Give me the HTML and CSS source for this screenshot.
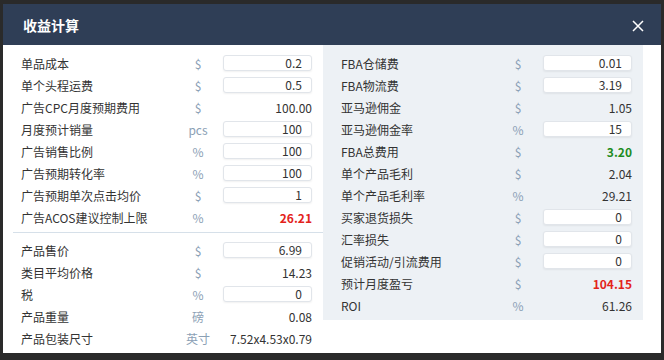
FILE: index.html
```html
<!DOCTYPE html>
<html lang="zh-CN">
<head>
<meta charset="utf-8">
<title>收益计算</title>
<link rel="stylesheet" href="styles.css">
</head>
<body>
<div class="modal">
  <div class="modal-header">
    <span class="modal-title">收益计算</span>
    <svg class="close" width="12" height="12" viewBox="0 0 12 12"><path d="M1 1L11 11M11 1L1 11" stroke="#fff" stroke-width="1.5" fill="none"/></svg>
  </div>
  <div class="modal-body">
    <div class="panel panel-left">
      <div class="row"><span class="label">单品成本</span><span class="unit">$</span><span class="input">0.2</span></div>
      <div class="row"><span class="label">单个头程运费</span><span class="unit">$</span><span class="input">0.5</span></div>
      <div class="row"><span class="label">广告CPC月度预期费用</span><span class="unit">$</span><span class="value">100.00</span></div>
      <div class="row"><span class="label">月度预计销量</span><span class="unit">pcs</span><span class="input">100</span></div>
      <div class="row"><span class="label">广告销售比例</span><span class="unit">%</span><span class="input">100</span></div>
      <div class="row"><span class="label">广告预期转化率</span><span class="unit">%</span><span class="input">100</span></div>
      <div class="row"><span class="label">广告预期单次点击均价</span><span class="unit">$</span><span class="input">1</span></div>
      <div class="row"><span class="label">广告ACOS建议控制上限</span><span class="unit">%</span><span class="value red">26.21</span></div>
      <div class="divider"></div>
      <div class="row"><span class="label">产品售价</span><span class="unit">$</span><span class="input">6.99</span></div>
      <div class="row"><span class="label">类目平均价格</span><span class="unit">$</span><span class="value">14.23</span></div>
      <div class="row"><span class="label">税</span><span class="unit">%</span><span class="input">0</span></div>
      <div class="row"><span class="label">产品重量</span><span class="unit">磅</span><span class="value">0.08</span></div>
      <div class="row"><span class="label">产品包装尺寸</span><span class="unit">英寸</span><span class="value">7.52x4.53x0.79</span></div>
    </div>
    <div class="panel panel-right">
      <div class="row"><span class="label">FBA仓储费</span><span class="unit">$</span><span class="input">0.01</span></div>
      <div class="row"><span class="label">FBA物流费</span><span class="unit">$</span><span class="input">3.19</span></div>
      <div class="row"><span class="label">亚马逊佣金</span><span class="unit">$</span><span class="value">1.05</span></div>
      <div class="row"><span class="label">亚马逊佣金率</span><span class="unit">%</span><span class="input">15</span></div>
      <div class="row"><span class="label">FBA总费用</span><span class="unit">$</span><span class="value green">3.20</span></div>
      <div class="row"><span class="label">单个产品毛利</span><span class="unit">$</span><span class="value">2.04</span></div>
      <div class="row"><span class="label">单个产品毛利率</span><span class="unit">%</span><span class="value">29.21</span></div>
      <div class="row"><span class="label">买家退货损失</span><span class="unit">$</span><span class="input">0</span></div>
      <div class="row"><span class="label">汇率损失</span><span class="unit">$</span><span class="input">0</span></div>
      <div class="row"><span class="label">促销活动/引流费用</span><span class="unit">$</span><span class="input">0</span></div>
      <div class="row"><span class="label">预计月度盈亏</span><span class="unit">$</span><span class="value red">104.15</span></div>
      <div class="row"><span class="label">ROI</span><span class="unit">%</span><span class="value">61.26</span></div>
    </div>
  </div>
</div>
</body>
</html>
```
FILE: styles.css
```css
html, body {
  margin: 0;
  padding: 0;
}
body {
  background: #2a2a2a;
  width: 664px;
  height: 360px;
  overflow: hidden;
  font-family: "Noto Sans CJK SC", "Noto Sans", sans-serif;
  font-size: 12px;
  color: #333;
}
.modal {
  margin: 4px 3px 0;
  width: 658px;
  height: 348px;
  background: #fff;
  display: flex;
  flex-direction: column;
}
.modal-header {
  height: 41px;
  flex: none;
  background: #2f3e56;
  display: flex;
  align-items: center;
  justify-content: space-between;
  padding: 0 17px 0 20px;
}
.modal-title {
  color: #fff;
  font-size: 14px;
  font-weight: 700;
  margin-top: 1px;
}
.close {
  display: block;
  margin-top: 2px;
}
.modal-body {
  display: flex;
  align-items: flex-start;
  flex: 1;
  background: #fff;
}
.panel {
  width: 320px;
  box-sizing: border-box;
  padding: 7px 11px 4px 18px;
}
.panel-left {
  background: #fff;
}
.panel-right {
  background: #edf1f5;
  align-self: flex-start;
  height: auto;
}
.row {
  display: grid;
  grid-template-columns: 157px 40px 94px;
  height: 22px;
  align-items: center;
}
.row > .input,
.row > .value {
  margin-left: 5px;
}
.label {
  white-space: nowrap;
  color: #333;
}
.unit {
  text-align: center;
  color: #8ba0b5;
}
.input {
  box-sizing: border-box;
  height: 16px;
  line-height: 14px;
  border: 1px solid #e1e5ea;
  border-radius: 3px;
  background: #fff;
  box-shadow: 0 1px 2px rgba(0, 0, 0, 0.06);
  text-align: right;
  padding-right: 9px;
  color: #333;
}
.value {
  text-align: right;
  color: #333;
}
.red {
  color: #e3231b;
  font-weight: 700;
}
.green {
  color: #1e8c1e;
  font-weight: 700;
}
.divider {
  height: 1px;
  background: #d6e0e9;
  margin: 4px -11px 6px -8px;
}
```
